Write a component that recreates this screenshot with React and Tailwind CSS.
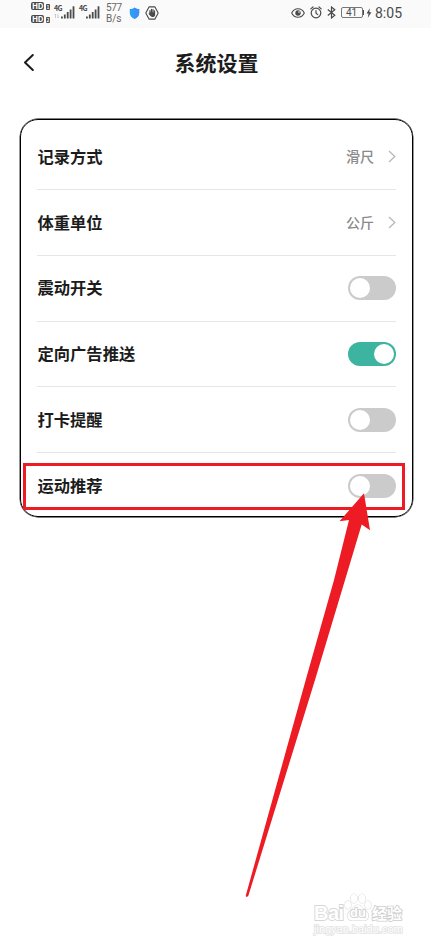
import React, { useState } from 'react';

const initialRows = [
    { label: '记录方式', value: '滑尺' },
    { label: '体重单位', value: '公斤' },
    { label: '震动开关', on: false },
    { label: '定向广告推送', on: true },
    { label: '打卡提醒', on: false },
    { label: '运动推荐', on: false },
];

const HdBadge = ({ sim }) => (
    <div className="flex items-center gap-[2px] h-[9px]">
        <span className="w-[13px] h-[8px] rounded-[2px] bg-[#4a4a4a] text-white text-[8px] leading-[8px] font-bold text-center tracking-[-0.3px]">HD</span>
        <span className="w-[4px] h-[6px] mt-[2px] rounded-[1px] bg-[#4a4a4a] text-white text-[5px] leading-[6px] font-bold text-center">{sim}</span>
    </div>
);

const Signal = ({ dim }) => (
    <div className="relative w-[21px] h-[15px]">
        <span className="absolute left-0 top-0 text-[7px] leading-[7px] font-bold tracking-[-0.6px]">4G</span>
        <svg className="absolute left-0 top-0" width="21" height="15" viewBox="-7 0 21 15" fill="#4a4a4a">
            {/* data arrows, idle */}
            {dim && <path d="M-5.5 13 V9 L-6.6 10.2 M-3.2 9 V13 L-2 11.8" fill="none" stroke="#c0c0c0" strokeWidth=".8" />}
            <rect x="0" y="11.5" width="1.8" height="2" />
            <rect x="2.9" y="9.5" width="1.8" height="4" />
            <rect x="5.8" y="7" width="1.8" height="6.5" />
            <rect x="8.7" y="4.5" width="1.8" height="9" />
            <rect x="11.6" y="1.3" width="1.8" height="12.2" />
        </svg>
    </div>
);

const StatusBar = () => (
    <div className="h-[28px] bg-[#fafafa] flex items-start text-[#4a4a4a] pl-[31px]">
        <div className="flex flex-col gap-[4px] pt-[1px] w-[23px]">
            <HdBadge sim="1" />
            <HdBadge sim="2" />
        </div>
        <div className="flex gap-[4px] pt-[5px]">
            <Signal dim />
            <Signal />
        </div>
        <div className="w-[24px] ml-[6px] pt-[2px] text-[10px] leading-[11px] text-[#666] font-['Roboto',sans-serif]">
            <div className="w-[17px] tracking-[-0.4px]">577</div>
            <div>B/s</div>
        </div>
        <svg className="mt-[7px] -ml-px" width="11" height="13" viewBox="0 0 11 13">
            <path d="M5.5 .6 C4 1.8 2.2 2.2 .8 2.1 V6 C.8 9 3 11 5.5 12 C8 11 10.2 9 10.2 6 V2.1 C8.8 2.2 7 1.8 5.5 .6Z" fill="#2aa0f5" />
            <path d="M5.5 .6 C7 1.8 8.8 2.2 10.2 2.1 V6 C10.2 9 8 11 5.5 12Z" fill="#3f8df5" />
        </svg>
        <svg className="mt-[6px] ml-[5px]" width="14" height="14" viewBox="0 0 14 14" fill="none" stroke="#4a4a4a">
            <path d="M4 .9 H10 L13.2 7 L10 13.1 H4 L.8 7Z" strokeWidth="1.1" strokeLinejoin="round" />
            <path d="M5 7 V4.6 M6.5 6.5 V3.4 M8 6.5 V3.6 M9.5 7 V4.8" strokeWidth="1.2" strokeLinecap="round" />
            <path d="M4.4 6.3 H10.1 V9 C10 10.4 9 11 7.5 11 C6 11 5 10 3.4 7.6 L4.4 7.6Z" fill="#4a4a4a" stroke="none" />
        </svg>
        <div className="flex items-center ml-auto mr-[29px] h-[25px]">
            <svg width="14" height="10" viewBox="0 0 14 10" fill="none" stroke="#4a4a4a">
                <path d="M.7 5 C3.4 -.7 10.6 -.7 13.3 5 C10.6 10.7 3.4 10.7 .7 5Z" strokeWidth="1.1" />
                <circle cx="7" cy="5" r="2.7" fill="#4a4a4a" stroke="none" />
                <circle cx="8" cy="4" r=".8" fill="#fafafa" stroke="none" />
            </svg>
            <svg className="ml-[5px]" width="12" height="13" viewBox="0 0 12 13" fill="none" stroke="#4a4a4a" strokeWidth="1.2" strokeLinecap="round">
                <circle cx="6" cy="7" r="4.8" />
                <path d="M6 4.5 V7.2 L7.8 8.6 M.8 2.9 L3 1 M11.2 2.9 L9 1" />
            </svg>
            <svg className="ml-[5px]" width="9" height="13" viewBox="0 0 9 13" fill="none" stroke="#4a4a4a" strokeWidth="1.2">
                <path d="M.8 3.5 L7.8 9.3 L4.5 12 V1 L7.8 3.7 L.8 9.5" />
            </svg>
            <div className="ml-[5px] w-[22px] h-[11px] rounded-[2px] border border-[#777] text-[10px] leading-[9px] text-center font-['Roboto',sans-serif]">41</div>
            <span className="w-[1.5px] h-[5px] bg-[#4a4a4a]" />
            <svg className="ml-[2px]" width="6" height="10" viewBox="0 0 6 10" fill="#4a4a4a">
                <path d="M3.8 .3 L.5 5.4 H2.6 L1.8 9.7 L5.5 4.2 H3.3Z" />
            </svg>
            <span className="ml-[3px] w-[27px] whitespace-nowrap text-[14px] leading-[16px] font-['Roboto',sans-serif]">8:05</span>
        </div>
    </div>
);

const Switch = ({ on, onClick }) => (
    <button
        onClick={onClick}
        className={`w-[48px] h-[24px] rounded-full p-[2px] flex items-center ${on ? 'bg-[#3cb4a0] justify-end' : 'bg-[#cbcbcb] justify-start'}`}
    >
        <span className="w-[20px] h-[20px] rounded-full bg-white" />
    </button>
);

const Watermark = () => (
    <div className="absolute left-[314px] top-[892px] w-[92px] h-[44px] text-white [paint-order:stroke_fill] font-['Liberation_Sans','Noto_Sans_CJK_SC',sans-serif]">
        <svg className="absolute left-[30px] top-[1px]" width="28" height="30" viewBox="0 0 28 30" fill="#fff" stroke="#d9d9d9" strokeWidth="1.1">
            <ellipse cx="4" cy="12" rx="3" ry="4" />
            <ellipse cx="10" cy="5.5" rx="3.2" ry="4.5" />
            <ellipse cx="18" cy="5.5" rx="3.2" ry="4.5" />
            <ellipse cx="24" cy="12" rx="3" ry="4" />
            <path d="M14 12 C18 12 19 16 22 18 C26 21 25 28 19 27.5 C16 27 12 27 9 27.5 C3 28 2 21 6 18 C9 16 10 12 14 12Z" />
        </svg>
        <span className="absolute left-0 top-[11px] text-[20px] leading-[20px] font-bold tracking-[-0.5px] [-webkit-text-stroke:1.8px_#d6d6d6]">Bai</span>
        <span className="absolute left-[36px] top-[14px] text-[13px] leading-[13px] font-bold [-webkit-text-stroke:1.6px_#cccccc]">du</span>
        <span className="absolute left-[58px] top-[14px] text-[15px] leading-[16px] font-bold whitespace-nowrap [-webkit-text-stroke:1.7px_#cecece]">经验</span>
        <span className="absolute left-0 top-[31px] text-[11px] leading-[12px] whitespace-nowrap [-webkit-text-stroke:1.6px_#e2e2e2]">jingyan.baidu.com</span>
    </div>
);

const App = () => {
    const [rows, setRows] = useState(initialRows);

    const toggle = (idx) => {
        setRows(prev => prev.map((row, i) => (i === idx ? { ...row, on: !row.on } : row)));
    };

    return (
        <div className="relative w-[431px] h-[947px] bg-white overflow-hidden text-[#1c1c1c] font-['Noto_Sans_CJK_SC',sans-serif]">
            <StatusBar />

            {/* Title bar */}
            <header className="h-[67px] flex items-center px-[23px]">
                <svg width="12" height="18" viewBox="0 0 12 18" fill="none" stroke="#1c1c1c" strokeWidth="2" strokeLinecap="round" strokeLinejoin="round">
                    <path d="M9.8 2 L2 9.5 L9.8 17" />
                </svg>
                <h1 className="flex-1 text-center text-[21px] leading-[30px] font-bold pr-[10px]">系统设置</h1>
            </header>

            {/* Settings card */}
            <main className="mt-[24px] ml-[20px] w-[393px] h-[398px] rounded-[18px] border border-black shadow-[0_0_0_0.4px_#000] pt-[4.6px] px-[16px]">
                {rows.map((row, idx) => (
                    <div
                        key={row.label}
                        className={`h-[65.7px] flex items-center justify-between ${idx < rows.length - 1 ? 'border-b border-[#e6e6e6]' : ''}`}
                    >
                        <span className="text-[16.3px] leading-[24px] font-bold pl-[0.5px] pb-[2px]">{row.label}</span>
                        {row.value ? (
                            <div className="flex items-center text-[#8a8a8a]">
                                <span className="text-[14px] leading-[20px] font-medium pb-[2px]">{row.value}</span>
                                <svg className="ml-[14px]" width="8" height="13" viewBox="0 0 8 13" fill="none" stroke="#b8b8b8" strokeWidth="1.3">
                                    <path d="M1 1 L6.8 6.5 L1 12" />
                                </svg>
                            </div>
                        ) : (
                            <Switch on={row.on} onClick={() => toggle(idx)} />
                        )}
                    </div>
                ))}
            </main>

            {/* Highlight box and pointer */}
            <div className="absolute left-[23px] top-[463px] w-[382px] h-[47px] border-[3px] border-[#ed1c24]" />
            <svg className="absolute left-[240px] top-[488px]" width="140" height="412" viewBox="240 488 140 412" fill="#ed1c24">
                <path d="M364 493.3 L370 530.3 L361.7 524.5 L315 680 L248.2 896.3 L246 897 L245.8 895.5 L305.7 680 L334 580 L349 520 L339.5 521.3Z" />
            </svg>

            <Watermark />
        </div>
    );
};

export default App;
